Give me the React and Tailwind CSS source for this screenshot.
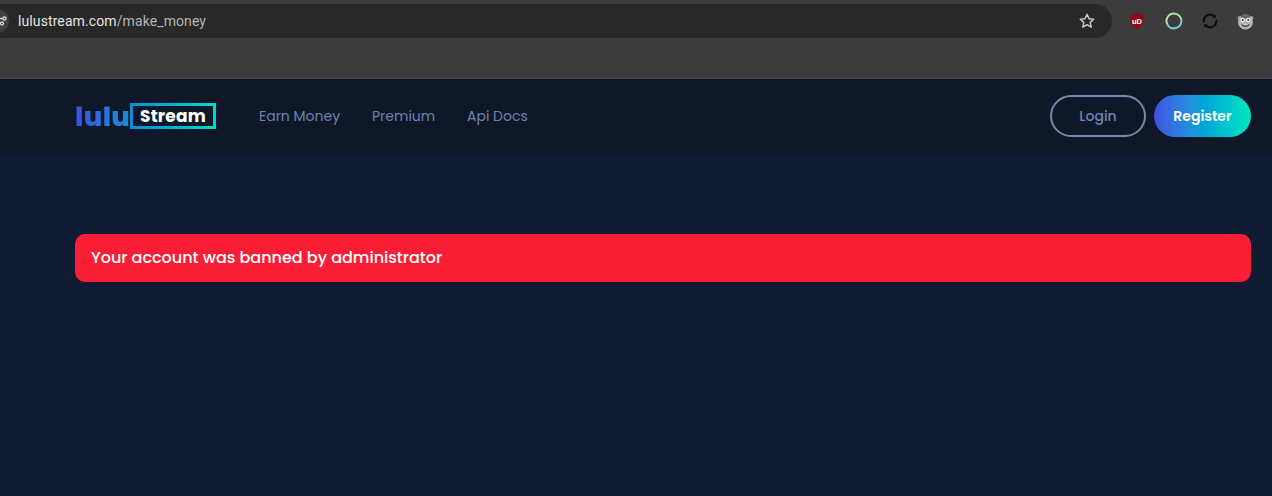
const poppins = { };

function Star() {
  return (
    <svg width="18" height="18" viewBox="0 0 24 24" fill="none" stroke="#c7c7c7" strokeWidth="2" strokeLinejoin="round">
      <path d="M12 3l2.7 5.9 6.3.7-4.7 4.3 1.3 6.3L12 17l-5.6 3.2 1.3-6.3L3 9.6l6.3-.7z" />
    </svg>
  );
}

function UBlock() {
  return (
    <svg width="18" height="18" viewBox="0 0 18 18">
      <path d="M9 1l7 2.2c0 7-1.5 11-7 14-5.500-3-7-7-7-14z" fill="#8f0a12" />
      <text x="9" y="11.500" textAnchor="middle" fontSize="7.500" fontWeight="700" fill="#fff" fontFamily="Liberation Sans, sans-serif">uD</text>
    </svg>
  );
}

function Ring() {
  return (
    <svg width="18" height="18" viewBox="0 0 18 18" fill="none" strokeWidth="2">
      <path d="M9 1.500A7.500 7.500 0 0 0 2.500 12.700" stroke="#b5e2a0" />
      <path d="M9 1.500A7.500 7.500 0 0 1 16.400 9" stroke="#a8d8a8" />
      <path d="M16.400 9A7.500 7.500 0 0 1 2.500 12.700" stroke="#72cfe8" />
    </svg>
  );
}

function Sync() {
  return (
    <svg width="16" height="16" viewBox="0 0 16 16" fill="none" stroke="#0a0a0a" strokeWidth="1.800">
      <path d="M2 9.500A6.200 6.200 0 0 1 12.500 3.600" />
      <path d="M14 6.500A6.200 6.200 0 0 1 3.500 12.400" />
      <path d="M13.800 1.200v3.600h-3.600z" fill="#0a0a0a" stroke="none" />
      <path d="M2.200 14.800v-3.600h3.600z" fill="#0a0a0a" stroke="none" />
    </svg>
  );
}

function Monkey() {
  return (
    <svg width="17" height="17" viewBox="0 0 17 17">
      <circle cx="2.500" cy="5" r="2" fill="#9a9a9a" />
      <circle cx="14.500" cy="5" r="2" fill="#9a9a9a" />
      <circle cx="8.500" cy="9" r="7.500" fill="#b5b5b5" />
      <ellipse cx="8.500" cy="3.500" rx="4.500" ry="2.500" fill="#666" />
      <circle cx="5.700" cy="7" r="2.200" fill="#eee" />
      <circle cx="11.300" cy="7" r="2.200" fill="#eee" />
      <circle cx="5.700" cy="7" r="1" fill="#333" />
      <circle cx="11.300" cy="7" r="1" fill="#333" />
      <path d="M4.500 11.500q4 3.500 8 0" stroke="#444" strokeWidth="1.300" fill="#ddd" />
    </svg>
  );
}

function SiteInfo() {
  return (
    <div className="w-6 h-6 -ml-[15px] rounded-full bg-[#3f3f3f] flex items-center justify-end pr-[1px] shrink-0">
      <svg width="12" height="12" viewBox="0 0 12 12" fill="none" stroke="#d8d8d8" strokeWidth="1.300">
        <path d="M0 3.500h7M0 8.500h4" />
        <circle cx="8.500" cy="3.500" r="1.500" />
        <circle cx="6" cy="8.500" r="1.500" />
      </svg>
    </div>
  );
}

export default function App() {
  const font = "font-['Poppins','Inter','Liberation_Sans',sans-serif]";
  return (
    <div className="w-[1272px] h-[496px] overflow-hidden flex flex-col bg-[#0f1b33]">
      <header className="h-[79px] shrink-0 bg-[#3c3c3c] border-b border-[#4c4c4c] pt-1 font-['Roboto',sans-serif]">
        <div className="h-[34px] flex items-center">
          <div className="w-[1112px] h-[34px] bg-[#282828] rounded-r-[17px] flex items-center overflow-hidden">
            <SiteInfo />
            <div className="ml-[9px] text-[14px] leading-none text-[#e3e3e3] tracking-[0.1px]">
              lulustream.com<span className="text-[#b4b4b4]">/make_money</span>
            </div>
            <div className="ml-auto mr-[16px] flex"><Star /></div>
          </div>
          <div className="flex items-center ml-[16px] gap-[19px]">
            <UBlock />
            <Ring />
            <Sync />
            <Monkey />
          </div>
        </div>
      </header>

      <nav className={`h-[75px] shrink-0 bg-[#0e1828] pl-[75px] pr-[21px] flex items-center ${font}`}>
        <div className="flex items-center h-[26px] -mt-[1px]">
          <span className="text-[27px] leading-none font-extrabold tracking-[0.4px] bg-gradient-to-r from-[#3a50e0] to-[#0f8fdc] bg-clip-text text-transparent w-[55px]">lulu</span>
          <div className="w-[86px] h-[26px] p-[3px] bg-gradient-to-r from-[#0a8fd8] to-[#00dcc0]">
            <div className="w-full h-full bg-[#0e1828] flex items-center justify-center text-white text-[17px] font-bold tracking-[0.2px] leading-none">Stream</div>
          </div>
        </div>
        <div className="flex items-center gap-[32px] ml-[43px] text-[14px] text-[#6f82b3] -mt-[1px]">
          <a className="w-[81px] whitespace-nowrap">Earn Money</a>
          <a className="w-[63px] whitespace-nowrap">Premium</a>
          <a className="w-[61px] whitespace-nowrap">Api Docs</a>
        </div>
        <div className="ml-auto flex items-center gap-2 -mt-[1px]">
          <button className="w-[96px] h-[42px] rounded-full border-2 border-[#7c88a8] text-[14px] font-medium text-[#6f82b3]">Login</button>
          <button className="w-[97px] h-[42px] rounded-full bg-gradient-to-r from-[#3f4fe4] via-[#00a3d6] to-[#00e6c0] text-[14px] font-semibold text-white">Register</button>
        </div>
      </nav>

      <main className={`flex-1 pt-[80px] pl-[75px] pr-[21px] ${font}`}>
        <div className="h-[48px] rounded-[10px] bg-[#f91e36] flex items-center pl-4 text-white text-[16px] font-medium">
          Your account was banned by administrator
        </div>
      </main>
    </div>
  );
}
